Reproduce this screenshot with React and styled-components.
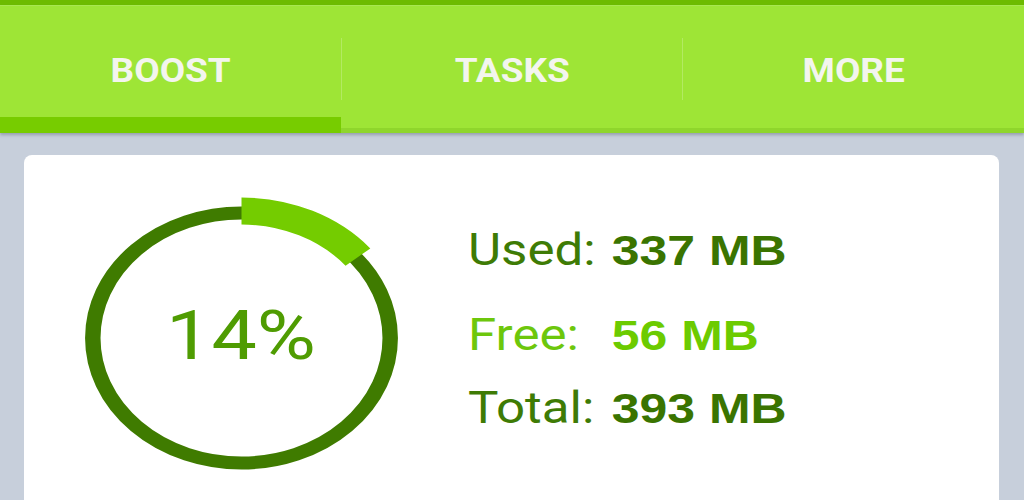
import React from 'react';
import styled, { createGlobalStyle } from 'styled-components';

const GlobalStyle = createGlobalStyle`
  html, body {
    margin: 0;
    padding: 0;
    background: #c7cfdb;
    font-family: Roboto, "Liberation Sans", sans-serif;
    overflow: hidden;
  }
`;

const TopStrip = styled.div`
  height: 5px;
  background: #6dbb00;
  border-bottom: 1px solid #aaea52;
`;

const TabBar = styled.div`
  position: relative;
  z-index: 1;
  display: flex;
  height: 127px;
  background: linear-gradient(to top, #8fd62c 5px, #9ee536 5px);
  box-shadow: 0 2px 3px rgba(60, 70, 90, 0.35);
`;

const Tab = styled.div`
  flex: 1;
  display: flex;
  justify-content: center;
  align-items: flex-start;
  padding-top: 48px;
  box-sizing: border-box;
  box-shadow: ${props => (props.active ? 'inset 0 -16px 0 #77cc00' : 'none')};
`;

const TabLabel = styled.span`
  display: inline-block;
  font-family: Roboto, sans-serif;
  font-weight: 700;
  font-size: 33px;
  line-height: 33px;
  color: #f3f5ee;
  transform: scaleX(1.12);
`;

const Divider = styled.div`
  width: 1px;
  height: 62px;
  margin-top: 32px;
  background: rgba(255, 255, 255, 0.22);
`;

const Card = styled.div`
  display: flex;
  align-items: flex-start;
  margin: 22px 25px 0 24px;
  height: 345px;
  padding: 38px 0 0 45px;
  box-sizing: border-box;
  background: #fff;
  border-radius: 8px 8px 0 0;
  overflow: hidden;
`;

const Gauge = styled.div`
  display: grid;
  place-items: center;
  width: 345px;
  height: 290px;
  flex-shrink: 0;

  & > * {
    grid-area: 1 / 1;
  }
`;

const Percent = styled.span`
  display: inline-block;
  font-family: Roboto, sans-serif;
  font-size: 69px;
  line-height: 69px;
  color: #4f9c02;
  transform: translateY(-3px) scaleX(1.17);
`;

const Stats = styled.div`
  display: flex;
  flex-direction: column;
  margin: 35px 0 0 54px;
  transform: scaleX(1.16);
  transform-origin: left top;
`;

const StatRow = styled.div`
  display: flex;
  align-items: baseline;
  margin-top: ${props => props.gap || 0}px;
  line-height: 44px;
  color: ${props => (props.light ? '#6dc70c' : '#3e7b05')};
`;

const Label = styled.span`
  width: 124px;
  font-family: Roboto, sans-serif;
  font-size: 44px;
`;

const Value = styled.span`
  font-family: "Liberation Sans", Arial, sans-serif;
  font-weight: 700;
  font-size: 43px;
  color: ${props => (props.light ? '#6ccb00' : '#3a7400')};
`;

function Ring({ percent }) {
  const r = 127;
  const a = (percent / 100) * Math.PI * 2;
  const x = 145 + r * Math.sin(a);
  const y = 145 - r * Math.cos(a);
  return (
    <svg width="345" height="290" viewBox="0 0 290 290" preserveAspectRatio="none">
      <circle cx="145" cy="145" r="125" fill="none" stroke="#3f7b00" strokeWidth="13" />
      <path
        d={`M145 ${145 - r} A${r} ${r} 0 0 1 ${x.toFixed(2)} ${y.toFixed(2)}`}
        fill="none"
        stroke="#74cc00"
        strokeWidth="27"
      />
    </svg>
  );
}

const stats = [
  { label: 'Used:', value: '337 MB', gap: 0 },
  { label: 'Free:', value: '56 MB', gap: 41, light: true },
  { label: 'Total:', value: '393 MB', gap: 29 },
];

export default function App() {
  return (
    <>
      <GlobalStyle />
      <TopStrip />
      <TabBar>
        <Tab active>
          <TabLabel>BOOST</TabLabel>
        </Tab>
        <Divider />
        <Tab>
          <TabLabel>TASKS</TabLabel>
        </Tab>
        <Divider />
        <Tab>
          <TabLabel>MORE</TabLabel>
        </Tab>
      </TabBar>
      <Card>
        <Gauge>
          <Ring percent={14} />
          <Percent>14%</Percent>
        </Gauge>
        <Stats>
          {stats.map(s => (
            <StatRow key={s.label} gap={s.gap} light={s.light}>
              <Label>{s.label}</Label>
              <Value light={s.light}>{s.value}</Value>
            </StatRow>
          ))}
        </Stats>
      </Card>
    </>
  );
}
